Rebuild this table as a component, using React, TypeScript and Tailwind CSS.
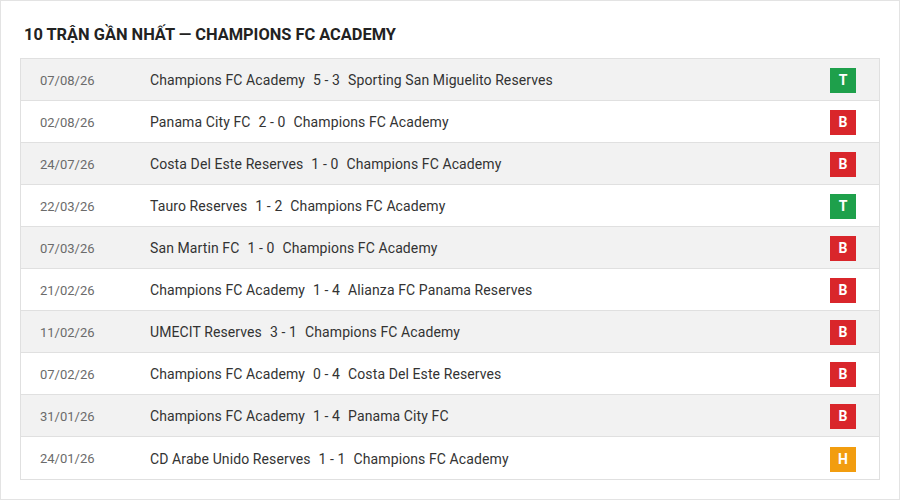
const matches = [
  { date: "07/08/26", home: "Champions FC Academy", score: "5 - 3", away: "Sporting San Miguelito Reserves", r: "T" },
  { date: "02/08/26", home: "Panama City FC", score: "2 - 0", away: "Champions FC Academy", r: "B" },
  { date: "24/07/26", home: "Costa Del Este Reserves", score: "1 - 0", away: "Champions FC Academy", r: "B" },
  { date: "22/03/26", home: "Tauro Reserves", score: "1 - 2", away: "Champions FC Academy", r: "T" },
  { date: "07/03/26", home: "San Martin FC", score: "1 - 0", away: "Champions FC Academy", r: "B" },
  { date: "21/02/26", home: "Champions FC Academy", score: "1 - 4", away: "Alianza FC Panama Reserves", r: "B" },
  { date: "11/02/26", home: "UMECIT Reserves", score: "3 - 1", away: "Champions FC Academy", r: "B" },
  { date: "07/02/26", home: "Champions FC Academy", score: "0 - 4", away: "Costa Del Este Reserves", r: "B" },
  { date: "31/01/26", home: "Champions FC Academy", score: "1 - 4", away: "Panama City FC", r: "B" },
  { date: "24/01/26", home: "CD Arabe Unido Reserves", score: "1 - 1", away: "Champions FC Academy", r: "H" },
];

const badgeColor: Record<string, string> = {
  T: "bg-[#1ea04b]",
  B: "bg-[#d9262b]",
  H: "bg-[#f29d0f]",
};

export default function App() {
  return (
    <div className="w-[900px] h-[500px] border border-[#e3e3e3] bg-white px-[19px] pt-[24px] font-['Roboto',sans-serif]">
      <h2 className="h-[20px] leading-[20px] pl-[4px] mb-[13px] text-[16.4px] font-bold text-[#222]">
        10 TRẬN GẦN NHẤT — CHAMPIONS FC ACADEMY
      </h2>
      <div className="border border-[#e0e0e0]">
        {matches.map((m, i) => (
          <div
            key={i}
            className={`flex items-center h-[42px] pt-[2px] ${i < matches.length - 1 ? "border-b border-[#e0e0e0]" : ""} ${i % 2 === 0 ? "bg-[#f2f2f2]" : "bg-white"}`}
          >
            <div className="w-[129px] pl-[19px] text-[13px] text-[#6b6b6b]">{m.date}</div>
            <div className="flex-1 text-[14px] tracking-[0.1px] text-[#333]">
              {m.home}
              <span className="mx-[8px]">{m.score}</span>
              {m.away}
            </div>
            <div className="pr-[23px]">
              <div className={`w-[26px] h-[25px] flex items-center justify-center text-white text-[14px] font-bold ${badgeColor[m.r]}`}>
                {m.r}
              </div>
            </div>
          </div>
        ))}
      </div>
    </div>
  );
}
